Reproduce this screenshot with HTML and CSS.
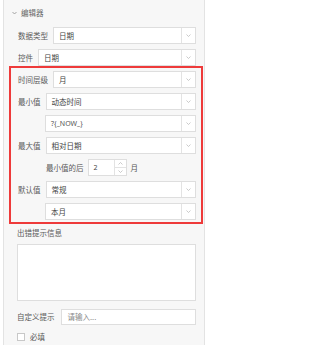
FILE: index.html
```html
<!DOCTYPE html>
<html lang="zh">
<head>
<meta charset="utf-8">
<link rel="stylesheet" href="styles.css">
</head>
<body>
<div class="panel">
  <div class="header">
    <svg class="caret" width="5" height="4" viewBox="0 0 5 4"><polyline points="0.5,1 2.5,3 4.5,1" fill="none" stroke="#999999" stroke-width="0.9"/></svg>
    <span class="title">编辑器</span>
  </div>

  <div class="group">
    <div class="row">
      <span class="label">数据类型</span>
      <div class="select"><span class="val">日期</span><span class="arrow"><svg width="5" height="3" viewBox="0 0 5 3"><polyline points="0.5,0.5 2.5,2.5 4.5,0.5" fill="none" stroke="#b5b5b5" stroke-width="0.7"/></svg></span></div>
    </div>
    <div class="row">
      <span class="label">控件</span>
      <div class="select"><span class="val">日期</span><span class="arrow"><svg width="5" height="3" viewBox="0 0 5 3"><polyline points="0.5,0.5 2.5,2.5 4.5,0.5" fill="none" stroke="#b5b5b5" stroke-width="0.7"/></svg></span></div>
    </div>
  </div>

  <div class="highlight">
    <div class="row">
      <span class="label">时间层级</span>
      <div class="select"><span class="val">月</span><span class="arrow"><svg width="5" height="3" viewBox="0 0 5 3"><polyline points="0.5,0.5 2.5,2.5 4.5,0.5" fill="none" stroke="#b5b5b5" stroke-width="0.7"/></svg></span></div>
    </div>
    <div class="row">
      <span class="label">最小值</span>
      <div class="select"><span class="val">动态时间</span><span class="arrow"><svg width="5" height="3" viewBox="0 0 5 3"><polyline points="0.5,0.5 2.5,2.5 4.5,0.5" fill="none" stroke="#b5b5b5" stroke-width="0.7"/></svg></span></div>
    </div>
    <div class="row indent">
      <div class="select"><span class="val latin">?{_NOW_}</span><span class="arrow"><svg width="5" height="3" viewBox="0 0 5 3"><polyline points="0.5,0.5 2.5,2.5 4.5,0.5" fill="none" stroke="#b5b5b5" stroke-width="0.7"/></svg></span></div>
    </div>
    <div class="row">
      <span class="label">最大值</span>
      <div class="select"><span class="val">相对日期</span><span class="arrow"><svg width="5" height="3" viewBox="0 0 5 3"><polyline points="0.5,0.5 2.5,2.5 4.5,0.5" fill="none" stroke="#b5b5b5" stroke-width="0.7"/></svg></span></div>
    </div>
    <div class="row indent num-row">
      <span class="label">最小值的后</span>
      <div class="number">
        <span class="num-val">2</span>
        <span class="spin">
          <span class="spin-btn"><svg width="5" height="3" viewBox="0 0 5 3"><polyline points="0.5,2.5 2.5,0.5 4.5,2.5" fill="none" stroke="#b5b5b5" stroke-width="0.7"/></svg></span>
          <span class="spin-btn down"><svg width="5" height="3" viewBox="0 0 5 3"><polyline points="0.5,0.5 2.5,2.5 4.5,0.5" fill="none" stroke="#b5b5b5" stroke-width="0.7"/></svg></span>
        </span>
      </div>
      <span class="unit">月</span>
    </div>
    <div class="row">
      <span class="label">默认值</span>
      <div class="select"><span class="val">常规</span><span class="arrow"><svg width="5" height="3" viewBox="0 0 5 3"><polyline points="0.5,0.5 2.5,2.5 4.5,0.5" fill="none" stroke="#b5b5b5" stroke-width="0.7"/></svg></span></div>
    </div>
    <div class="row indent">
      <div class="select"><span class="val">本月</span><span class="arrow"><svg width="5" height="3" viewBox="0 0 5 3"><polyline points="0.5,0.5 2.5,2.5 4.5,0.5" fill="none" stroke="#b5b5b5" stroke-width="0.7"/></svg></span></div>
    </div>
  </div>

  <div class="lower">
    <div class="lower-label">出错提示信息</div>
    <div class="textarea"></div>
    <div class="row hint-row">
      <span class="label">自定义提示</span>
      <div class="input"><span class="placeholder">请输入...</span></div>
    </div>
    <div class="check-row">
      <span class="checkbox"></span>
      <span class="check-label">必填</span>
    </div>
  </div>
</div>
</body>
</html>
```

FILE: styles.css
```css
html, body {
  margin: 0;
  padding: 0;
  background: #ffffff;
}

body {
  width: 209px;
  height: 345px;
  overflow: hidden;
  font-family: "Noto Sans CJK SC", "Noto Sans", sans-serif;
  font-size: 7.5px;
  color: #555555;
}

.panel {
  margin-left: 3px;
  width: 202px;
  height: 345px;
  box-sizing: border-box;
  border-left: 1px solid #e3e3e3;
  border-right: 1px solid #e3e3e3;
  background: #f7f7f7;
  padding-top: 8px;
}

.header {
  display: flex;
  align-items: center;
  height: 10px;
  padding-left: 8px;
  gap: 2px;
  color: #666666;
}

.caret {
  display: block;
  flex-shrink: 0;
}

.title {
  margin-left: 2px;
  line-height: 10px;
}

.group {
  margin-top: 9px;
  padding: 0 8px 0 14px;
  display: flex;
  flex-direction: column;
  gap: 5px;
}

.row {
  display: flex;
  align-items: center;
  height: 17px;
  gap: 5px;
}

.label {
  white-space: nowrap;
  color: #5a5a5a;
  line-height: 10px;
}

.select {
  flex: 1;
  height: 17px;
  box-sizing: border-box;
  border: 1px solid #dedede;
  background: #ffffff;
  display: flex;
  align-items: center;
}

.val {
  flex: 1;
  padding-left: 5px;
  color: #444444;
  line-height: 10px;
}

.val.latin {
  font-family: "Noto Sans", "Liberation Sans", sans-serif;
  font-size: 7px;
  color: #555555;
}

.arrow {
  width: 13px;
  height: 100%;
  border-left: 1px solid #e3e3e3;
  display: flex;
  align-items: center;
  justify-content: center;
}

.arrow svg {
  display: block;
}

.highlight {
  margin-left: 5px;
  margin-right: 1px;
  border: 2px solid #ee3a3a;
  padding: 3px 5px 2px 7px;
  display: flex;
  flex-direction: column;
  gap: 5px;
}

.indent {
  padding-left: 27px;
}

.num-row {
  gap: 4px;
  padding-left: 28px;
}

.number {
  width: 39px;
  height: 17px;
  box-sizing: border-box;
  border: 1px solid #dedede;
  background: #ffffff;
  display: flex;
}

.num-val {
  flex: 1;
  padding-left: 5px;
  line-height: 15px;
  color: #444444;
  font-family: "Noto Sans", sans-serif;
  font-size: 7px;
}

.spin {
  width: 11px;
  border-left: 1px solid #e3e3e3;
  display: flex;
  flex-direction: column;
}

.spin-btn {
  flex: 1;
  display: flex;
  align-items: center;
  justify-content: center;
}

.spin-btn.down {
  border-top: 1px solid #e3e3e3;
}

.unit {
  color: #555555;
  line-height: 10px;
}

.lower {
  padding: 0 8px 0 13px;
}

.lower-label {
  margin-top: 4px;
  height: 10px;
  line-height: 10px;
  color: #5a5a5a;
}

.textarea {
  margin-top: 6px;
  height: 57px;
  box-sizing: border-box;
  border: 1px solid #dedede;
  background: #ffffff;
}

.hint-row {
  margin-top: 8px;
  height: 16px;
  gap: 6px;
}

.input {
  flex: 1;
  height: 16px;
  box-sizing: border-box;
  border: 1px solid #dedede;
  background: #ffffff;
  display: flex;
  align-items: center;
}

.placeholder {
  padding-left: 6px;
  color: #888888;
  line-height: 10px;
}

.check-row {
  margin-top: 7px;
  display: flex;
  align-items: center;
  gap: 5px;
  height: 9px;
}

.checkbox {
  width: 8px;
  height: 8px;
  box-sizing: border-box;
  border: 1px solid #c8c8c8;
  background: #ffffff;
}

.check-label {
  color: #555555;
  line-height: 10px;
}
```
